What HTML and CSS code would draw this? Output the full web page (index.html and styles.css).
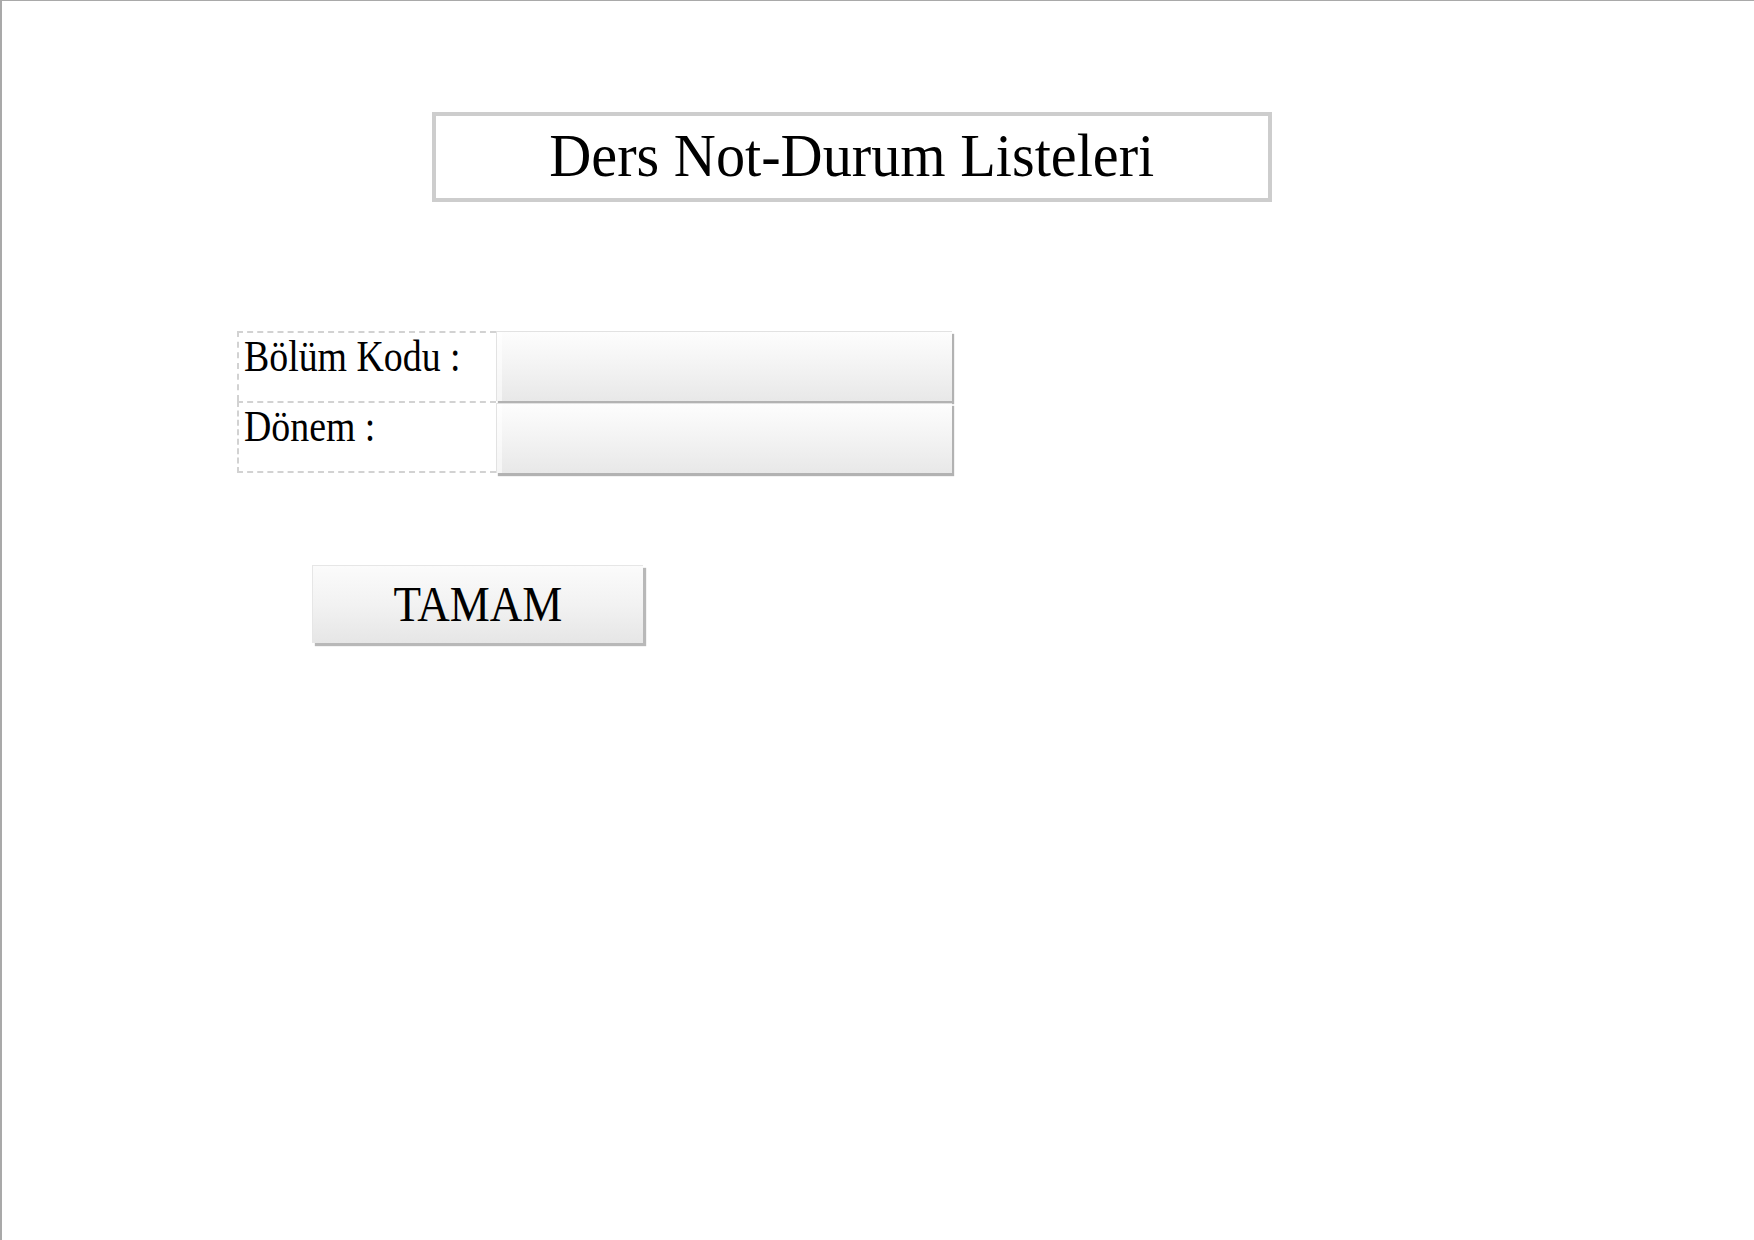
FILE: index.html
```html
<!DOCTYPE html>
<html lang="tr">
<head>
<meta charset="utf-8">
<title>Ders Not-Durum Listeleri</title>
<link rel="stylesheet" href="styles.css">
</head>
<body>
<div class="page">
  <header class="title-box">
    <h1 class="title"><span class="squeeze squeeze-title">Ders Not-Durum Listeleri</span></h1>
  </header>
  <form class="form">
    <div class="grid">
      <div class="labels">
        <div class="label-cell"><span class="squeeze squeeze-label">Bölüm Kodu :</span></div>
        <div class="label-cell label-cell-last"><span class="squeeze squeeze-label">Dönem :</span></div>
      </div>
      <div class="fields">
        <div class="field"></div>
        <div class="field"></div>
      </div>
    </div>
    <button type="button" class="btn"><span class="squeeze squeeze-btn">TAMAM</span></button>
  </form>
</div>
</body>
</html>
```

FILE: styles.css
```css
html, body {
  margin: 0;
  padding: 0;
  background: #ffffff;
}

body {
  font-family: "Liberation Serif", "Times New Roman", serif;
  color: #000;
}

.page {
  box-sizing: border-box;
  width: 1754px;
  height: 1240px;
  border-top: 1px solid #a9a9a9;
  border-left: 2px solid #a9a9a9;
  padding-top: 111px;
  overflow: hidden;
}

.squeeze {
  display: inline-block;
  white-space: nowrap;
}

.title-box {
  box-sizing: border-box;
  margin-left: 430px;
  width: 840px;
  height: 90px;
  border: 4px solid #cdcdcd;
  text-align: center;
}

.title {
  margin: 0;
  font-weight: normal;
  font-size: 61px;
  line-height: 80px;
}

.squeeze-title {
  transform: scaleX(0.955);
  transform-origin: center;
}

.form {
  margin: 129px 0 0 235px;
  display: flex;
  flex-direction: column;
  align-items: flex-start;
}

.grid {
  display: flex;
  align-items: flex-start;
}

.labels {
  width: 259px;
  display: flex;
  flex-direction: column;
}

.label-cell {
  box-sizing: border-box;
  height: 70px;
  border-top: 2px dashed #d2d2d2;
  border-left: 2px dashed #d2d2d2;
  padding: 2px 0 0 5px;
  font-size: 44px;
  line-height: 44px;
}

.label-cell-last {
  height: 72px;
  border-bottom: 2px dashed #d2d2d2;
}

.squeeze-label {
  transform: scaleX(0.86);
  transform-origin: left center;
}

.fields {
  display: flex;
  flex-direction: column;
  gap: 2px;
}

.field {
  box-sizing: border-box;
  width: 456px;
  height: 70px;
  border-top: 1px solid #e2e2e2;
  border-left: 1px solid #e2e2e2;
  background: linear-gradient(to bottom, #fdfdfd 0%, #f4f4f4 45%, #e8e8e8 100%);
  box-shadow: 2px 3px 1px #b2b2b2, inset 5px 0 0 rgba(255, 255, 255, 0.55);
}

.btn {
  box-sizing: border-box;
  margin: 92px 0 0 75px;
  width: 331px;
  height: 78px;
  padding: 0;
  border: none;
  border-top: 1px solid #e6e6e6;
  border-left: 1px solid #e6e6e6;
  background: linear-gradient(to bottom, #fbfbfb 0%, #f2f2f2 50%, #e6e6e6 100%);
  box-shadow: 3px 3px 1px #b8b8b8;
  font-family: "Liberation Serif", "Times New Roman", serif;
  font-size: 50px;
  line-height: 73px;
  color: #000;
  text-align: center;
  cursor: pointer;
}

.squeeze-btn {
  transform: scaleX(0.9);
  transform-origin: center;
}
```
